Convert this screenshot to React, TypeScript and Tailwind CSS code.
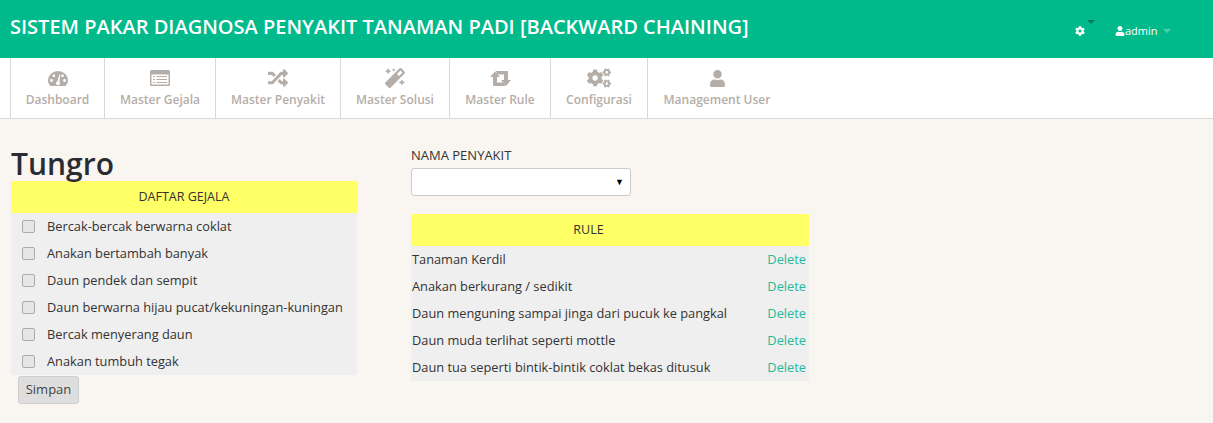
import { FaRandom, FaMagic, FaCogs, FaUser, FaCog } from "react-icons/fa";

function Gauge() {
  return (
    <svg viewBox="0 0 20 15" className="h-[15px] w-[20px]" fill="currentColor">
      <path d="M2.5 15C1 13.5 0 11.5 0 9.5a10 9.5 0 0 1 20 0c0 2-1 4-2.5 5.5z" />
      <circle cx="3.5" cy="9.5" r="1.4" fill="#fff" />
      <circle cx="5.8" cy="4.8" r="1.4" fill="#fff" />
      <circle cx="16.5" cy="9.5" r="1.4" fill="#fff" />
      <circle cx="14.5" cy="4.8" r="1.4" fill="#fff" />
      <path d="M9 12L11.3 3.5l1 .3L11 12.5z" fill="#fff" />
      <circle cx="10" cy="12.3" r="2" fill="#fff" />
    </svg>
  );
}

function ListAlt() {
  return (
    <svg viewBox="0 0 20 16" className="h-[16px] w-[20px]">
      <rect width="20" height="16" rx="1.5" fill="currentColor" />
      <rect x="1.5" y="4.5" width="17" height="10" fill="#fff" />
      <path d="M3 6h2v1H3zM6.500 6H17v1H6.500zM3 9h2v1H3zM6.500 9H17v1H6.500zM3 12h2v1H3zM6.500 12H17v1H6.500z" fill="currentColor" />
    </svg>
  );
}

function Retweet() {
  return (
    <svg viewBox="0 0 21 15" className="h-[15px] w-[21px]" fill="currentColor">
      <path d="M5 .5L10 6H7v5.500h6.500L15.500 15H4q-1 0-1-1V6H0z" />
      <path d="M16 15l-5-6h3V3.500H7.500L5.500 0H17q1 0 1 1v8h3z" />
    </svg>
  );
}

const nav = [
  { label: "Dashboard", icon: <Gauge />, w: "w-[94px]" },
  { label: "Master Gejala", icon: <ListAlt />, w: "w-[111px]" },
  { label: "Master Penyakit", icon: <FaRandom className="h-[20px] w-[20px]" />, w: "w-[125px]" },
  { label: "Master Solusi", icon: <FaMagic className="h-[20px] w-[20px]" />, w: "w-[109px]" },
  { label: "Master Rule", icon: <Retweet />, w: "w-[101px]" },
  { label: "Configurasi", icon: <FaCogs className="h-[20px] w-[24px]" />, w: "w-[97px]" },
  { label: "Management User", icon: <FaUser className="h-[17px] w-[17px]" />, w: "w-[139px]" },
];

const gejala = [
  "Bercak-bercak berwarna coklat",
  "Anakan bertambah banyak",
  "Daun pendek dan sempit",
  "Daun berwarna hijau pucat/kekuningan-kuningan",
  "Bercak menyerang daun",
  "Anakan tumbuh tegak",
];

const rules = [
  "Tanaman Kerdil",
  "Anakan berkurang / sedikit",
  "Daun menguning sampai jinga dari pucuk ke pangkal",
  "Daun muda terlihat seperti mottle",
  "Daun tua seperti bintik-bintik coklat bekas ditusuk",
];

export default function App() {
  return (
    <div className="min-h-[423px] bg-[#f9f6f1] font-['Open_Sans',sans-serif] text-[12.8px] text-[#333]">
      <header className="flex h-[58px] items-start justify-between bg-[#00ba8b]">
        <h1 className="pl-[10px] pt-[13px] text-[20px] leading-[27px] font-semibold whitespace-nowrap text-white">
          SISTEM PAKAR DIAGNOSA PENYAKIT TANAMAN PADI [BACKWARD CHAINING]
        </h1>
        <div className="flex pt-[25px] text-[11px] leading-[12px] text-white">
          <div className="relative w-[45px] pl-[5px] pt-px">
            <FaCog className="h-[10px] w-[10px]" />
            <span className="absolute left-[17px] top-[-5px] border-x-[4px] border-t-[4px] border-x-transparent border-t-[#007a5c]" />
          </div>
          <div className="flex w-[98px] items-center">
            <FaUser className="h-[10px] w-[10px]" />
            <span>admin</span>
            <span className="ml-[5px] border-x-[4px] border-t-[4px] border-x-transparent border-t-[#4fd0ae]" />
          </div>
        </div>
      </header>

      <nav className="flex h-[61px] border-b border-[#d9d9d9] bg-white pl-[10px]">
        {nav.map(({ label, icon, w }) => (
          <div key={label} className={`flex flex-col items-center border-l border-[#d9d9d9] pt-[10px] text-[12px] font-semibold leading-[16px] text-[#b5aea8] ${w}`}>
            <div className="mb-[4px] flex h-[20px] items-center justify-center">{icon}</div>
            <span>{label}</span>
          </div>
        ))}
      </nav>

      <main className="flex items-start pl-[11px] pt-[26px]">
        <section className="w-[346px]">
          <h2 className="pt-px text-[30px] leading-[35px] font-semibold text-[#2b2b33]">Tungro</h2>
          <div className="flex h-[32px] items-center justify-center bg-[#ffff66] text-[12.5px]">DAFTAR GEJALA</div>
          <ul className="bg-[#efefef]">
            {gejala.map((g) => (
              <li key={g} className="flex h-[27px] items-center pl-[11px]">
                <span className="mr-[12px] h-[13px] w-[13px] rounded-[2px] border border-[#ababab] bg-[#e6e6e6]" />
                <span>{g}</span>
              </li>
            ))}
          </ul>
          <button className="ml-[7px] mt-px h-[28px] w-[61px] rounded-[3px] border border-[#cfcfcf] bg-[#dedede] text-[13px] text-[#444]">Simpan</button>
        </section>

        <section className="ml-[54px] w-[398px]">
          <label className="block text-[13px] leading-[20px]">NAMA PENYAKIT</label>
          <div className="mt-[3px] flex h-[28px] w-[220px] items-center justify-end rounded-[3px] border border-[#cccccc] bg-white pr-[6px] text-[9px] text-black">▼</div>
          <div className="mt-[18px] flex h-[32px] items-center justify-center bg-[#ffff66] pr-[43px] pt-px text-[12.5px]">RULE</div>
          <ul className="bg-[#efefef]">
            {rules.map((r) => (
              <li key={r} className="flex h-[27px] items-center justify-between pl-px pr-[3px]">
                <span>{r}</span>
                <a className="text-[#26b99a]">Delete</a>
              </li>
            ))}
          </ul>
        </section>
      </main>
    </div>
  );
}
